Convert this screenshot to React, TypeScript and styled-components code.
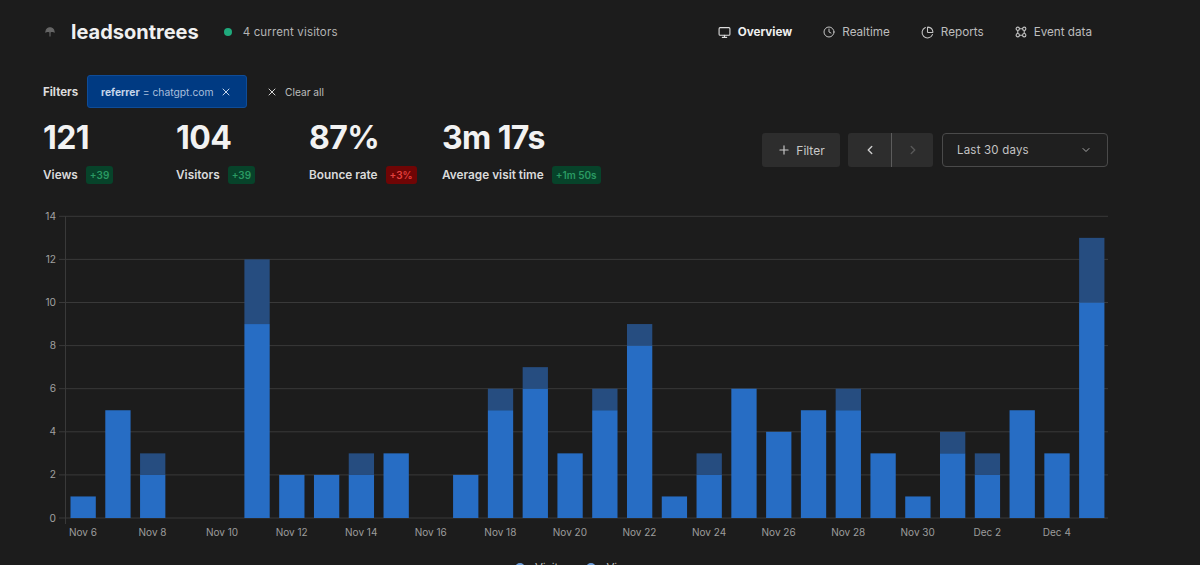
import React from "react";
import styled, { createGlobalStyle } from "styled-components";
import { Monitor, Clock, ChartPie, Plus, X, ChevronLeft, ChevronRight, ChevronDown } from "lucide-react";

const Global = createGlobalStyle`
  html, body { margin: 0; padding: 0; background: #1c1c1c; height: 565px; overflow: hidden; }
  body { font-family: Inter, "Liberation Sans", sans-serif; color: #e6e6e6; }
`;

const Page = styled.div`
  width: 1065px;
  height: 565px;
  margin-left: 43px;
  overflow: hidden;
`;
const Header = styled.header`
  display: flex;
  align-items: center;
  height: 64px;
  padding-right: 16px;
`;
const Logo = styled.svg`
  width: 10px;
  height: 10px;
  margin: 0 16px 0 2px;
  color: #666;
`;
const Title = styled.h1`
  margin: 0 25px 0 0;
  font-size: 20px;
  font-weight: 700;
  color: #f0f0f0;
  line-height: 26px;
`;
const Dot = styled.span`
  width: 8px;
  height: 8px;
  border-radius: 50%;
  background: #1fa97c;
  margin-right: 11px;
`;
const Visitors = styled.span`
  font-size: 11.5px;
  letter-spacing: 0.15px;
  color: #b4b4b4;
`;
const Nav = styled.nav`
  margin-left: auto;
  display: flex;
  gap: 31px;
`;
const NavItem = styled.a<{ $active?: boolean }>`
  display: flex;
  align-items: center;
  gap: 7px;
  font-size: 11.7px;
  font-weight: ${(p) => (p.$active ? 700 : 400)};
  color: ${(p) => (p.$active ? "#efefef" : "#bdbdbd")};
  svg { color: ${(p) => (p.$active ? "#dedede" : "#c4c4c4")}; }
`;
const FilterRow = styled.div`
  display: flex;
  align-items: center;
  height: 33px;
  margin-top: 11px;
`;
const FilterLabel = styled.span`
  font-size: 11.5px;
  font-weight: 700;
  color: #dcdcdc;
  width: 44px;
`;
const Chip = styled.div`
  width: 160px;
  height: 33px;
  box-sizing: border-box;
  display: flex;
  align-items: center;
  padding: 0 14px 0 13px;
  background: #003a82;
  border: 1px solid #0f4c97;
  border-radius: 3px;
  font-size: 10.3px;
  color: #a9bfdc;
  svg { margin-left: auto; color: #c6d6ea; }
`;
const ChipKey = styled.b`
  font-weight: 700;
  color: #c5d5ea;
  margin-right: 3px;
`;
const ChipValue = styled.span`
  margin-left: 3px;
`;
const ClearAll = styled.div`
  display: flex;
  align-items: center;
  gap: 7px;
  margin-left: 19px;
  font-size: 10.2px;
  color: #bdbdbd;
  svg { color: #d6d6d6; }
`;
const MetricsRow = styled.div`
  display: flex;
  align-items: flex-start;
  margin-top: 10px;
  height: 87px;
`;
const Metric = styled.div`
  width: 133px;
`;
const Value = styled.div`
  font-size: 32px;
  font-weight: 700;
  line-height: 40px;
  letter-spacing: -0.6px;
  color: #f2f2f2;
`;
const LabelRow = styled.div`
  display: flex;
  align-items: center;
  gap: 8px;
  margin-top: 8px;
  font-size: 11.8px;
  font-weight: 600;
  color: #dadada;
  white-space: nowrap;
`;
const Badge = styled.span<{ $bad?: boolean }>`
  font-size: 10px;
  font-weight: 600;
  line-height: 18px;
  padding: 0 4px;
  border-radius: 3px;
  background: ${(p) => (p.$bad ? "#6f0505" : "#07432a")};
  color: ${(p) => (p.$bad ? "#e5413f" : "#2a9a62")};
`;
const Controls = styled.div`
  margin-left: auto;
  display: flex;
  gap: 8px;
  margin-top: 15px;
`;
const FilterButton = styled.button`
  width: 78px;
  height: 34px;
  display: flex;
  align-items: center;
  justify-content: center;
  gap: 5px;
  border: 0;
  border-radius: 3px;
  background: #2d2d2d;
  color: #c9c9c9;
  font: 400 12px Inter, sans-serif;
`;
const Pager = styled.div`
  display: flex;
  height: 34px;
  margin-right: 1px;
  border-radius: 3px;
  overflow: hidden;
  background: #2d2d2d;
`;
const PageButton = styled.button<{ $disabled?: boolean }>`
  width: 43px;
  padding: 0;
  display: flex;
  align-items: center;
  justify-content: center;
  background: transparent;
  border: 0;
  color: ${(p) => (p.$disabled ? "#575757" : "#c9c9c9")};
  & + & { border-left: 1px solid #5c5c5c; width: 42px; }
`;
const Select = styled.div`
  width: 166px;
  height: 34px;
  box-sizing: border-box;
  display: flex;
  align-items: center;
  justify-content: space-between;
  padding: 0 15px 0 14px;
  border: 1px solid #4a4a4a;
  border-radius: 4px;
  background: #1f1f1f;
  font-size: 11.5px;
  letter-spacing: 0.2px;
  color: #c4c4c4;
  svg { color: #a8a8a8; }
`;
const ChartWrap = styled.div`
  margin-left: -43px;
  width: 1200px;
  height: 356px;
`;
const ChartSvg = styled.svg`
  display: block;
`;
const Legend = styled.div`
  display: flex;
  justify-content: center;
  gap: 11px;
  margin-left: -43px;
  width: 1154px;
  font-size: 11.5px;
  line-height: 14px;
  color: #bdbdbd;
`;
const LegendItem = styled.span`
  display: flex;
  align-items: center;
  gap: 10px;
`;
const Swatch = styled.i`
  width: 10px;
  height: 10px;
  border-radius: 50%;
  background: #6b9bd8;
`;

const visitors = [1,5,2,0,0,9,2,2,2,3,0,2,5,6,3,5,8,1,2,6,4,5,5,3,1,3,2,5,3,10];
const views = [1,5,3,0,0,12,2,2,3,3,0,2,6,7,3,6,9,1,3,6,4,5,6,3,1,4,3,5,3,13];
const dates = ["Nov 6","Nov 8","Nov 10","Nov 12","Nov 14","Nov 16","Nov 18","Nov 20","Nov 22","Nov 24","Nov 26","Nov 28","Nov 30","Dec 2","Dec 4"];

const Y0 = 518;
const UNIT = 21.55;
const TOP = 205;
const yOf = (v: number) => Y0 - TOP - v * UNIT;

function Chart() {
  return (
    <ChartSvg width="1200" height="356" viewBox="0 0 1200 356">
      {[0,2,4,6,8,10,12,14].map((v) => (
        <g key={v}>
          <line x1="59" x2="1108" y1={yOf(v)} y2={yOf(v)} stroke="#393939" strokeWidth="1" />
          <text x="56" y={yOf(v) + 3.5} textAnchor="end" fontSize="10.2" fill="#a0a0a0" fontFamily="Inter, sans-serif">{v}</text>
        </g>
      ))}
      <line x1="65.5" x2="65.5" y1={yOf(14)} y2={yOf(0) + 6} stroke="#393939" />
      {views.map((v, i) => {
        const x = 70.5 + 34.78 * i;
        const vis = visitors[i];
        return (
          <g key={i}>
            {v > vis && <rect x={x} y={yOf(v)} width="25.3" height={(v - vis) * UNIT} fill="#264d80" />}
            {vis > 0 && <rect x={x} y={yOf(vis)} width="25.3" height={vis * UNIT} fill="#276dc4" />}
          </g>
        );
      })}
      {dates.map((d, i) => (
        <text key={d} x={83 + 69.56 * i} y={Y0 - TOP + 18} textAnchor="middle" fontSize="10" fill="#9c9c9c" fontFamily="Inter, sans-serif">{d}</text>
      ))}
    </ChartSvg>
  );
}

export default function App() {
  return (
    <Page>
      <Global />
      <Header>
        <Logo viewBox="0 0 12 12" fill="none" stroke="currentColor" strokeWidth="1.3">
          <path d="M1 6 C1.5 2.5 4 1 6 1 C8 1 10.5 2.5 11 6 L8.5 5 L6 6 L3.5 5 Z" fill="currentColor" />
          <path d="M6 5.5 V11.5" />
        </Logo>
        <Title>leadsontrees</Title>
        <Dot />
        <Visitors>4 current visitors</Visitors>
        <Nav>
          <NavItem $active><Monitor size={13} />Overview</NavItem>
          <NavItem><Clock size={12} />Realtime</NavItem>
          <NavItem><ChartPie size={13} />Reports</NavItem>
          <NavItem>
            <svg width="12" height="12" viewBox="0 0 13 13" fill="none" stroke="currentColor" strokeWidth="1.2">
              <circle cx="3" cy="3" r="1.8" />
              <circle cx="10" cy="3" r="1.8" />
              <circle cx="3" cy="10" r="1.8" />
              <circle cx="10" cy="10" r="1.8" />
              <path d="M4.8 3 H8.2 M4.8 10 H8.2 M3 4.8 V8.2 M10 4.8 V8.2" />
            </svg>
            Event data
          </NavItem>
        </Nav>
      </Header>
      <FilterRow>
        <FilterLabel>Filters</FilterLabel>
        <Chip>
          <ChipKey>referrer</ChipKey>=<ChipValue>chatgpt.com</ChipValue>
          <X size={12} />
        </Chip>
        <ClearAll><X size={12} />Clear all</ClearAll>
      </FilterRow>
      <MetricsRow>
        <Metric>
          <Value>121</Value>
          <LabelRow>Views<Badge>+39</Badge></LabelRow>
        </Metric>
        <Metric>
          <Value>104</Value>
          <LabelRow>Visitors<Badge>+39</Badge></LabelRow>
        </Metric>
        <Metric>
          <Value>87%</Value>
          <LabelRow>Bounce rate<Badge $bad>+3%</Badge></LabelRow>
        </Metric>
        <Metric>
          <Value>3m 17s</Value>
          <LabelRow>Average visit time<Badge>+1m 50s</Badge></LabelRow>
        </Metric>
        <Controls>
          <FilterButton><Plus size={14} />Filter</FilterButton>
          <Pager>
            <PageButton><ChevronLeft size={14} strokeWidth={2.5} /></PageButton>
            <PageButton $disabled><ChevronRight size={14} strokeWidth={2.5} /></PageButton>
          </Pager>
          <Select>Last 30 days<ChevronDown size={12} /></Select>
        </Controls>
      </MetricsRow>
      <ChartWrap><Chart /></ChartWrap>
      <Legend>
        <LegendItem><Swatch />Visitors</LegendItem>
        <LegendItem><Swatch />Views</LegendItem>
      </Legend>
    </Page>
  );
}
